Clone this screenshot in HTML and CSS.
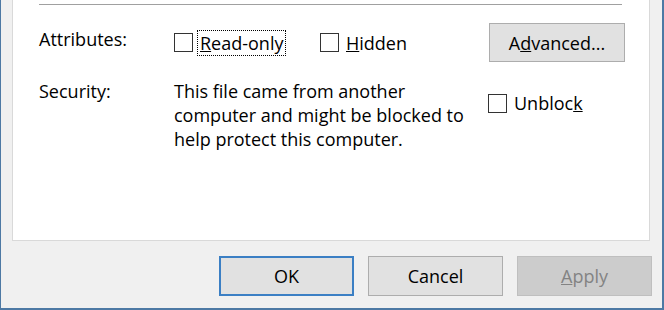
FILE: index.html
```html
<!DOCTYPE html>
<html>
	<head>
		<meta charset="UTF-8">
		<title>Properties</title>
		<link rel="stylesheet" href="styles.css">
	</head>
	<body>
		<div class="window">
			<div class="panel">
				<div class="sep"></div>
				<div class="row attrs">
					<span class="label">Attributes:</span>
					<label class="check readonly"><span class="box"></span><span class="text focus"><u>R</u>ead-only</span></label>
					<label class="check"><span class="box"></span><span class="text"><u>H</u>idden</span></label>
					<button class="btn advanced">A<u>d</u>vanced...</button>
				</div>
				<div class="row security">
					<span class="label">Security:</span>
					<p class="desc">This file came from another<br>computer and might be blocked to<br>help protect this computer.</p>
					<label class="check unblock"><span class="box"></span><span class="text">Unbloc<u>k</u></span></label>
				</div>
			</div>
			<div class="actions">
				<button class="btn default">OK</button>
				<button class="btn">Cancel</button>
				<button class="btn" disabled><u>A</u>pply</button>
			</div>
		</div>
	</body>
</html>
```

FILE: styles.css
```css
body {
	margin: 0;
	font-family: "Open Sans", "Segoe UI", sans-serif;
	font-size: 18px;
	color: #000;
}

.window {
	width: 664px;
	height: 310px;
	box-sizing: border-box;
	background: #f0f0f0;
	border-left: 1px solid #4d79a4;
	border-right: 2px solid #4d79a4;
	border-bottom: 2px solid #4d79a4;
	padding: 0 10px 0 11px;
}

.panel {
	width: 638px;
	height: 241px;
	box-sizing: border-box;
	background: #fff;
	border: 1px solid #d9d9d9;
	border-top: none;
	padding: 4px 24px 0 26px;
}

.sep {
	height: 1px;
	background: #a0a0a0;
	margin-right: 3px;
}

.row {
	display: flex;
}

.attrs {
	align-items: center;
	height: 39px;
	margin-top: 18px;
}

.security {
	margin-top: 17px;
}

.label {
	flex: none;
	width: 135px;
	line-height: 24px;
	align-self: flex-start;
}

.attrs .label {
	margin-top: 4px;
}

.check {
	display: flex;
	align-items: center;
}

.check .box {
	width: 19px;
	height: 19px;
	box-sizing: border-box;
	border: 1px solid #333;
	background: #fff;
}

.check .text {
	margin-left: 5px;
	padding: 0 2px;
	line-height: 24px;
}

.focus {
	outline: 1px dotted #000;
}

.readonly {
	width: 146px;
}

.desc {
	margin: 0;
	width: 314px;
	line-height: 24px;
}

.unblock {
	align-self: flex-start;
	margin-top: 12px;
}

.btn {
	font: inherit;
	color: #000;
	background: #e1e1e1;
	border: 1px solid #adadad;
	padding: 0;
	width: 135px;
	height: 40px;
}

.advanced {
	margin-left: auto;
	width: 136px;
	height: 39px;
}

.actions {
	display: flex;
	justify-content: flex-end;
	gap: 14px;
	margin-top: 15px;
}

.btn.default {
	border: 2px solid #3b7fc4;
}

.btn:disabled {
	background: #ccc;
	border-color: #bfbfbf;
	color: #838383;
}
```
